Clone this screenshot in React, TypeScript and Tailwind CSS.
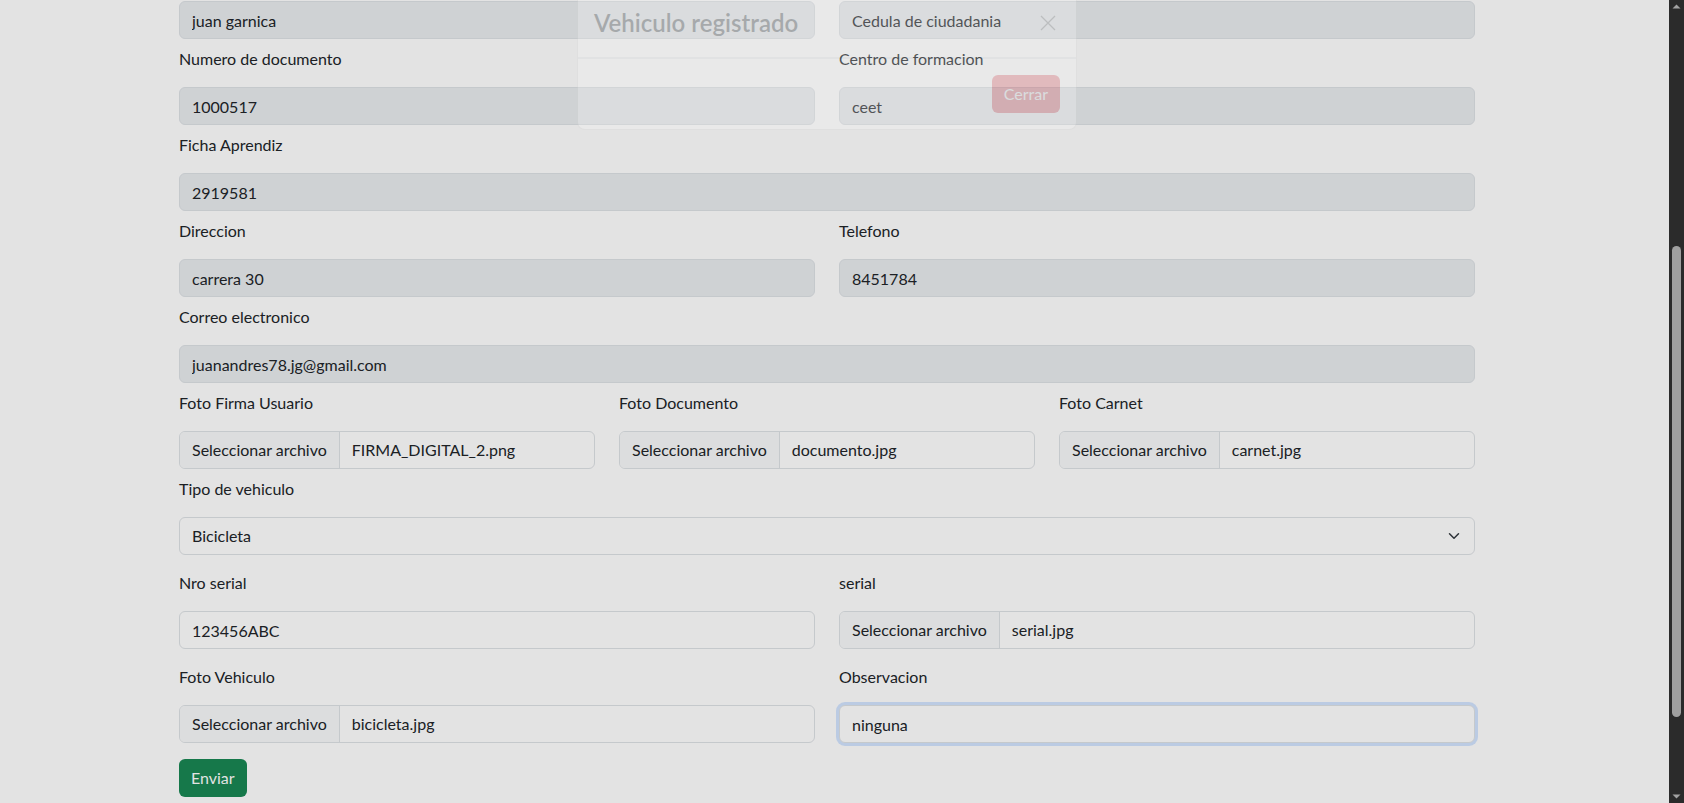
import React from "react";

const boxBase =
  "flex h-[38px] w-full items-center rounded-[6px] border border-[#dee2e6] text-base leading-6 text-[#212529]";

function TextInput({ value, disabled, focused }: { value: string; disabled?: boolean; focused?: boolean }) {
  return (
    <input
      readOnly
      value={value}
      className={
        boxBase +
        " px-3 outline-none " +
        (disabled ? "bg-[#e9ecef]" : "bg-white") +
        (focused ? " border-[#86b7fe] shadow-[0_0_0_3px_rgba(13,110,253,0.18)]" : "")
      }
    />
  );
}

function FileInput({ file }: { file: string }) {
  return (
    <div className={boxBase + " overflow-hidden bg-white"}>
      <span className="flex h-full items-center border-r border-[#dee2e6] bg-[#f8f9fa] px-3">Seleccionar archivo</span>
      <span className="pl-3">{file}</span>
    </div>
  );
}

function Field({ label, children }: { label: string; children: React.ReactNode }) {
  return (
    <div>
      <label className="mb-4 block leading-6">{label}</label>
      {children}
    </div>
  );
}

export default function App() {
  return (
    <div className="flex h-[803px] w-full overflow-hidden bg-white font-['Lato',sans-serif] text-base text-[#212529]">
      <div className="relative flex-1 overflow-hidden">
        <div className="pr-[15px]">
          <form className="mx-auto max-w-[1320px] px-3 pt-px">
            <div className="mb-2 grid grid-cols-2 gap-x-6">
              <TextInput value="juan garnica" disabled />
              <TextInput value="Cedula de ciudadania" disabled />
            </div>
            <div className="mb-2 grid grid-cols-2 gap-x-6">
              <Field label="Numero de documento"><TextInput value="1000517" disabled /></Field>
              <Field label="Centro de formacion"><TextInput value="ceet" disabled /></Field>
            </div>
            <div className="mb-2">
              <Field label="Ficha Aprendiz"><TextInput value="2919581" disabled /></Field>
            </div>
            <div className="mb-2 grid grid-cols-2 gap-x-6">
              <Field label="Direccion"><TextInput value="carrera 30" disabled /></Field>
              <Field label="Telefono"><TextInput value="8451784" disabled /></Field>
            </div>
            <div className="mb-2">
              <Field label="Correo electronico"><TextInput value="juanandres78.jg@gmail.com" disabled /></Field>
            </div>
            <div className="mb-2 grid grid-cols-3 gap-x-6">
              <Field label="Foto Firma Usuario"><FileInput file="FIRMA_DIGITAL_2.png" /></Field>
              <Field label="Foto Documento"><FileInput file="documento.jpg" /></Field>
              <Field label="Foto Carnet"><FileInput file="carnet.jpg" /></Field>
            </div>
            <div className="mb-4">
              <Field label="Tipo de vehiculo">
                <div className={boxBase + " justify-between bg-white px-3"}>
                  <span>Bicicleta</span>
                  <svg width="16" height="12" viewBox="0 0 16 16" fill="none" stroke="#343a40" strokeWidth="2" strokeLinecap="round" strokeLinejoin="round">
                    <path d="m2 5 6 6 6-6" />
                  </svg>
                </div>
              </Field>
            </div>
            <div className="mb-4 grid grid-cols-2 gap-x-6">
              <Field label="Nro serial"><TextInput value="123456ABC" /></Field>
              <Field label="serial"><FileInput file="serial.jpg" /></Field>
            </div>
            <div className="mb-4 grid grid-cols-2 gap-x-6">
              <Field label="Foto Vehiculo"><FileInput file="bicicleta.jpg" /></Field>
              <Field label="Observacion"><TextInput value="ninguna" focused /></Field>
            </div>
            <button type="button" className="h-[38px] rounded-[6px] bg-[#198754] px-3 leading-6 text-white">Enviar</button>
          </form>
        </div>

        {/* backdrop */}
        <div className="absolute inset-0 bg-black/[0.11]" />

        {/* modal, mid fade-in */}
        <div className="absolute inset-0 flex items-start justify-center pr-[15px]">
          <div className="-mt-3 w-[500px] rounded-lg border border-black/[0.175] bg-white opacity-[0.23]">
            <div className="flex items-center justify-between border-b border-[#dee2e6] p-4">
              <h1 className="text-2xl font-semibold leading-9">Vehiculo registrado</h1>
              <button type="button" className="p-1 opacity-50">
                <svg width="16" height="16" viewBox="0 0 16 16" stroke="#000" strokeWidth="1.3">
                  <path d="M1 1 15 15M15 1 1 15" />
                </svg>
              </button>
            </div>
            <div className="flex justify-end border-t border-[#dee2e6] p-3">
              <button type="button" className="m-1 h-[38px] rounded-[6px] bg-[#dc3545] px-3 leading-6 text-white">Cerrar</button>
            </div>
          </div>
        </div>
      </div>

      {/* scrollbar */}
      <div className="flex w-[15px] flex-col items-center bg-[#2b2b2b]">
        <svg width="15" height="15" viewBox="0 0 15 15" className="shrink-0">
          <path d="M3.5 8.5 7.5 4.5 11.5 8.5Z" fill="#a3a3a3" />
        </svg>
        <div className="w-full flex-1 px-[3px]">
          <div className="mt-[231px] h-[471px] rounded-full bg-[#a0a0a0]" />
        </div>
        <svg width="15" height="15" viewBox="0 0 15 15" className="shrink-0">
          <path d="M3.5 6.5 7.5 10.5 11.5 6.5Z" fill="#a3a3a3" />
        </svg>
      </div>
    </div>
  );
}
